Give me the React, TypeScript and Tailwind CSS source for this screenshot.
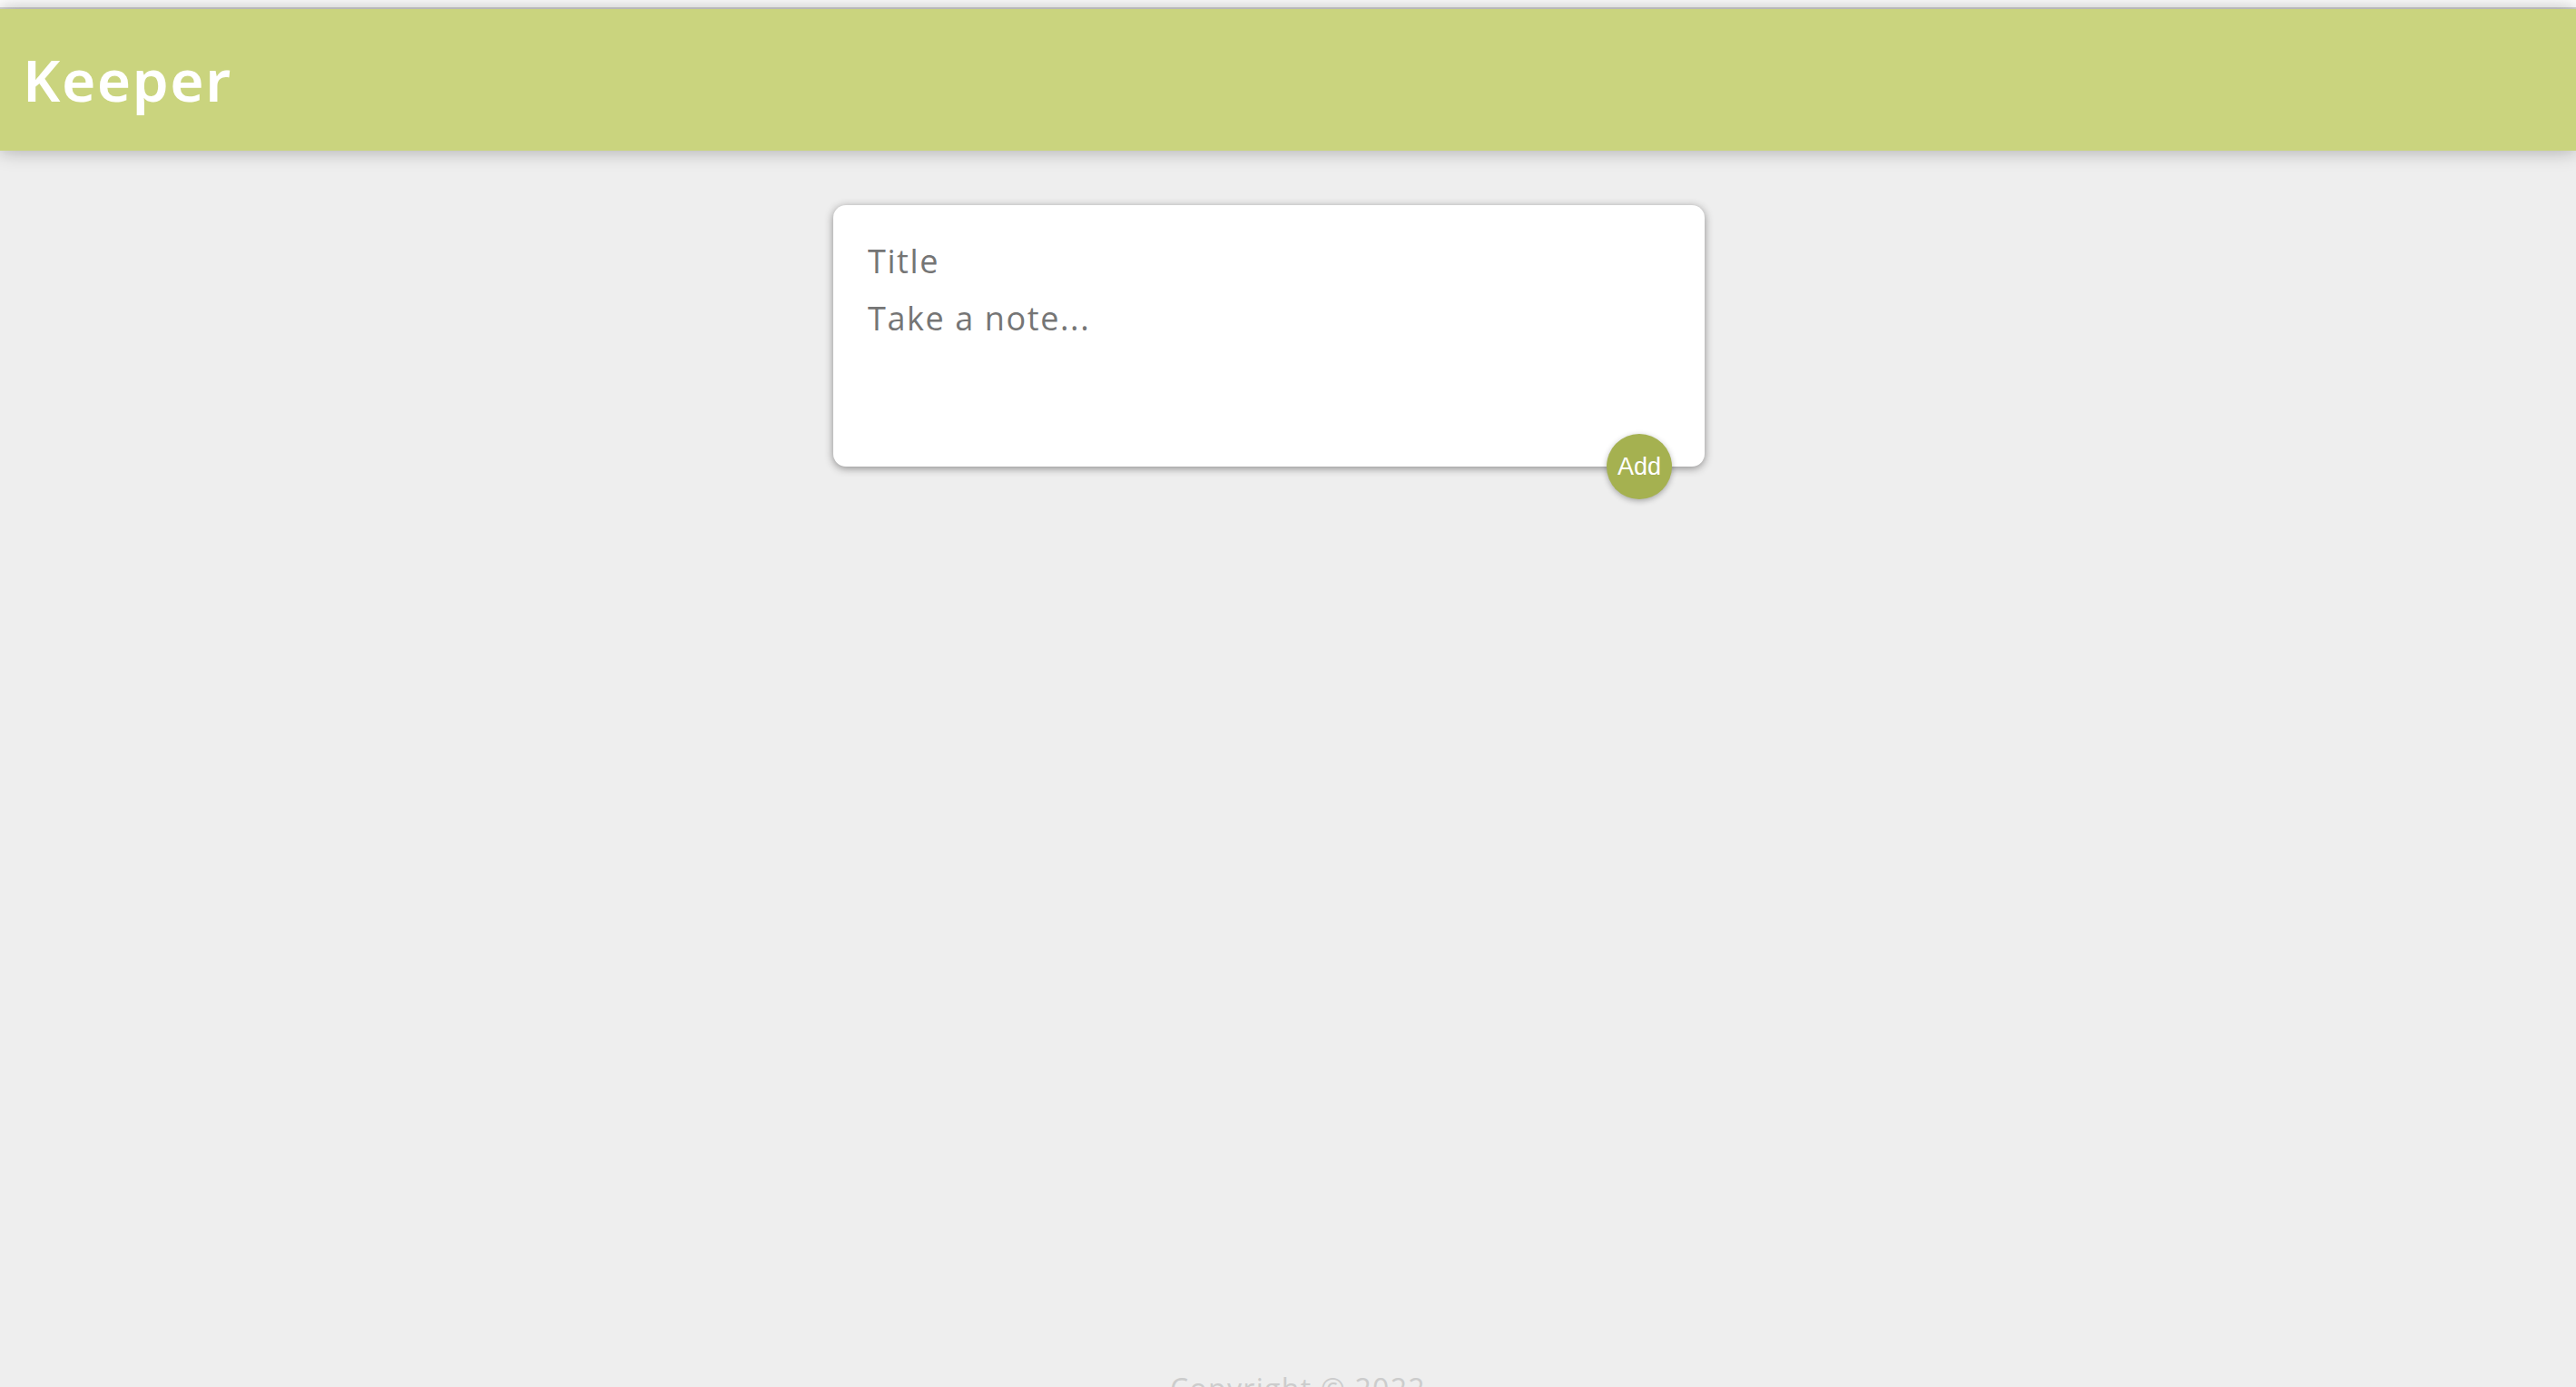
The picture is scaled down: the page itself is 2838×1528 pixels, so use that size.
import React from "react";

export default function App() {
  return (
    <div className="relative flex h-[1528px] flex-col overflow-hidden bg-[#eeeeee]" style={{ fontFamily: '"Open Sans", "Noto Sans", sans-serif' }}>
      <div className="h-[8px] bg-white" />
      <div className="h-[2px] bg-[#d6d6d6]" />
      <header className="relative z-10 flex h-[156px] items-center bg-[#cad47e] pl-[25px] shadow-[0_0_20px_0_rgba(0,0,0,0.3)]">
        <h1
          className="text-[64px] font-semibold leading-none tracking-[1.5px] text-white"
          style={{ fontFamily: '"Noto Sans", sans-serif' }}
        >
          Keeper
        </h1>
      </header>
      <main className="flex flex-1 justify-center pr-[42px] pt-[60px]">
        <form className="relative h-[288px] w-[960px] rounded-[14px] bg-white px-[30px] py-[30px] shadow-[0_2px_10px_rgb(138,137,137)]">
          <input
            className="block w-full border-none bg-transparent px-[8px] py-[8px] text-[36px] leading-[47px] tracking-[1.6px] text-[#757575] outline-none placeholder:text-[#757575]"
            placeholder="Title"
          />
          <textarea
            className="block h-[165px] w-full resize-none border-none bg-transparent px-[8px] pt-[8px] text-[36px] leading-[47px] tracking-[1.6px] text-[#757575] outline-none placeholder:text-[#757575]"
            placeholder="Take a note..."
          />
          <button
            type="button"
            className="absolute bottom-[-36px] right-[36px] flex h-[72px] w-[72px] items-center justify-center rounded-full bg-[#a5b150] text-[27px] text-white shadow-[0_2px_6px_rgba(0,0,0,0.3)]"
            style={{ fontFamily: '"Liberation Sans", Arial, sans-serif' }}
          >
            Add
          </button>
        </form>
      </main>
      <footer className="h-[18px] pl-[22px] text-center">
        <p className="text-[32px] leading-[40px] tracking-[1.3px] text-[#cccccc]">Copyright © 2022</p>
      </footer>
    </div>
  );
}
